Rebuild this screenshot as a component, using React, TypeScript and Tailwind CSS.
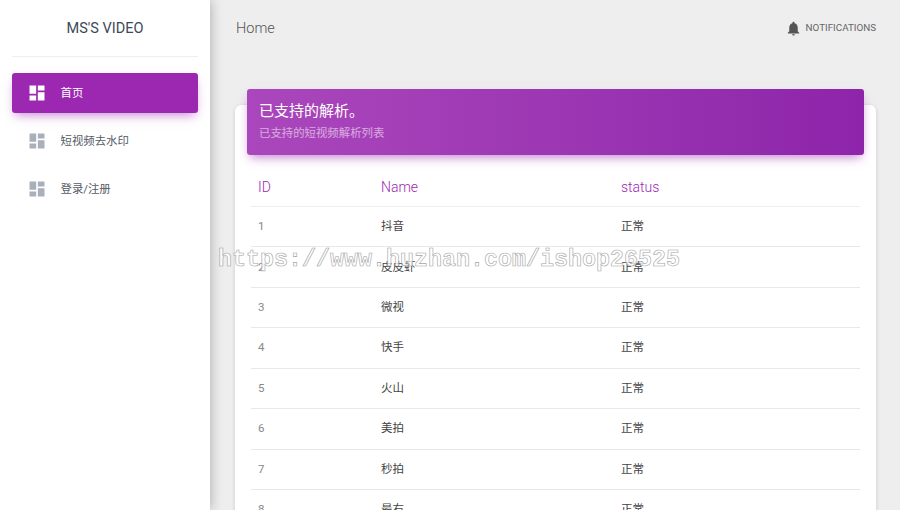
// App.tsx - MS'S VIDEO dashboard: sidebar, top bar, and supported parser table
const CJK = "font-['Roboto','Noto_Sans_CJK_SC',sans-serif]";

const platforms = [
  { id: 1, name: "抖音" },
  { id: 2, name: "皮皮虾" },
  { id: 3, name: "微视" },
  { id: 4, name: "快手" },
  { id: 5, name: "火山" },
  { id: 6, name: "美拍" },
  { id: 7, name: "秒拍" },
  { id: 8, name: "最右" },
];

const navItems = [
  { label: "首页", active: true },
  { label: "短视频去水印", active: false },
  { label: "登录/注册", active: false },
];

function DashboardIcon({ className }: { className: string }) {
  return (
    <svg viewBox="0 0 24 24" width="20" height="20" fill="currentColor" className={className} aria-hidden="true">
      <path d="M3 13h8V3H3v10zm0 8h8v-6H3v6zm10 0h8V11h-8v10zm0-18v6h8V3h-8z" />
    </svg>
  );
}

function BellIcon() {
  return (
    <svg viewBox="0 0 24 24" width="17" height="17" fill="currentColor" className="text-[#555]" aria-hidden="true">
      <path d="M12 22c1.1 0 2-.9 2-2h-4c0 1.1.89 2 2 2zm6-6v-5c0-3.07-1.64-5.64-4.5-6.32V4c0-.83-.67-1.5-1.5-1.5s-1.5.67-1.5 1.5v.68C7.63 5.36 6 7.92 6 11v5l-2 2v1h16v-1l-2-2z" />
    </svg>
  );
}

function Sidebar() {
  return (
    <aside className="relative z-10 w-[210px] shrink-0 bg-white shadow-[0_0_12px_rgba(0,0,0,0.3)]">
      <div className="mx-3 flex h-[57px] items-center justify-center border-b border-[#eeeeee] pt-[2px] text-[14.5px] text-[#3c4858]">
        MS'S VIDEO
      </div>
      <nav className="mx-3 mt-4 flex flex-col gap-2">
        {navItems.map((item) => (
          <div
            key={item.label}
            className={
              item.active
                ? "flex h-10 items-center rounded-[3px] bg-[#9c27b0] pl-[15px] text-white shadow-[0_5px_10px_-3px_rgba(156,39,176,0.55)]"
                : "flex h-10 items-center pl-[15px] text-[#555b66]"
            }
          >
            <DashboardIcon className={item.active ? "text-white" : "text-[#a9afbb]"} />
            <span className="ml-[13.5px] pt-[2px] text-[11.4px]">{item.label}</span>
          </div>
        ))}
      </nav>
    </aside>
  );
}

function PlatformTable() {
  return (
    <div className="mx-4 mt-[14px]">
      <div className="flex h-[38px] items-center border-b border-[#eeeeee] text-[14px] font-light text-[#9c27b0]">
        <div className="w-[123px] pl-[7px]">ID</div>
        <div className="w-[240px] pl-[7px]">Name</div>
        <div className="pl-[7px]">status</div>
      </div>
      {platforms.map((p) => (
        <div key={p.id} className="flex h-[40.43px] items-center border-b border-[#e8e8e8] text-[11.5px] text-[#444]">
          <div className="w-[123px] pl-[7px] text-[#888]">{p.id}</div>
          <div className="w-[240px] pl-[7px]">{p.name}</div>
          <div className="pl-[7px]">正常</div>
        </div>
      ))}
    </div>
  );
}

export default function App() {
  return (
    <div className={`relative flex h-[510px] w-[900px] overflow-hidden bg-[#eeeeee] ${CJK}`}>
      <Sidebar />
      <main className="min-w-0 flex-1">
        <header className="flex h-[56px] items-center justify-between pl-[26px] pr-6 pt-[1px]">
          <span className="text-[14.5px] font-light text-[#555]">Home</span>
          <div className="flex items-center gap-[4px]">
            <BellIcon />
            <span className="text-[9.8px] uppercase text-[#666]">Notifications</span>
          </div>
        </header>
        <section className="ml-[25px] mr-6 mt-[49px] rounded-[6px] bg-white pb-6 shadow-[0_1px_4px_rgba(0,0,0,0.14)]">
          <div className="mx-3 flex h-[66px] -translate-y-4 flex-col justify-center rounded-[3px] bg-gradient-to-r from-[#ab47bc] to-[#8e24aa] pb-[2px] pl-3 shadow-[0_5px_10px_-3px_rgba(156,39,176,0.6)]">
            <h2 className="text-[15px] font-normal leading-[20px] text-white">已支持的解析。</h2>
            <p className="mt-[4px] text-[11.4px] leading-[16px] text-white/55">已支持的短视频解析列表</p>
          </div>
          <div className="-mt-4">
            <PlatformTable />
          </div>
        </section>
      </main>
      {/* watermark stamped over the screenshot */}
      <div className="pointer-events-none absolute left-[218px] top-[243px] z-20 whitespace-nowrap font-['Liberation_Mono',monospace] text-[23.33px] font-bold leading-[34px] text-white/80 opacity-95 [-webkit-text-stroke:0.6px_#a0a0a0]">
        https://www.huzhan.com/ishop26525
      </div>
    </div>
  );
}
